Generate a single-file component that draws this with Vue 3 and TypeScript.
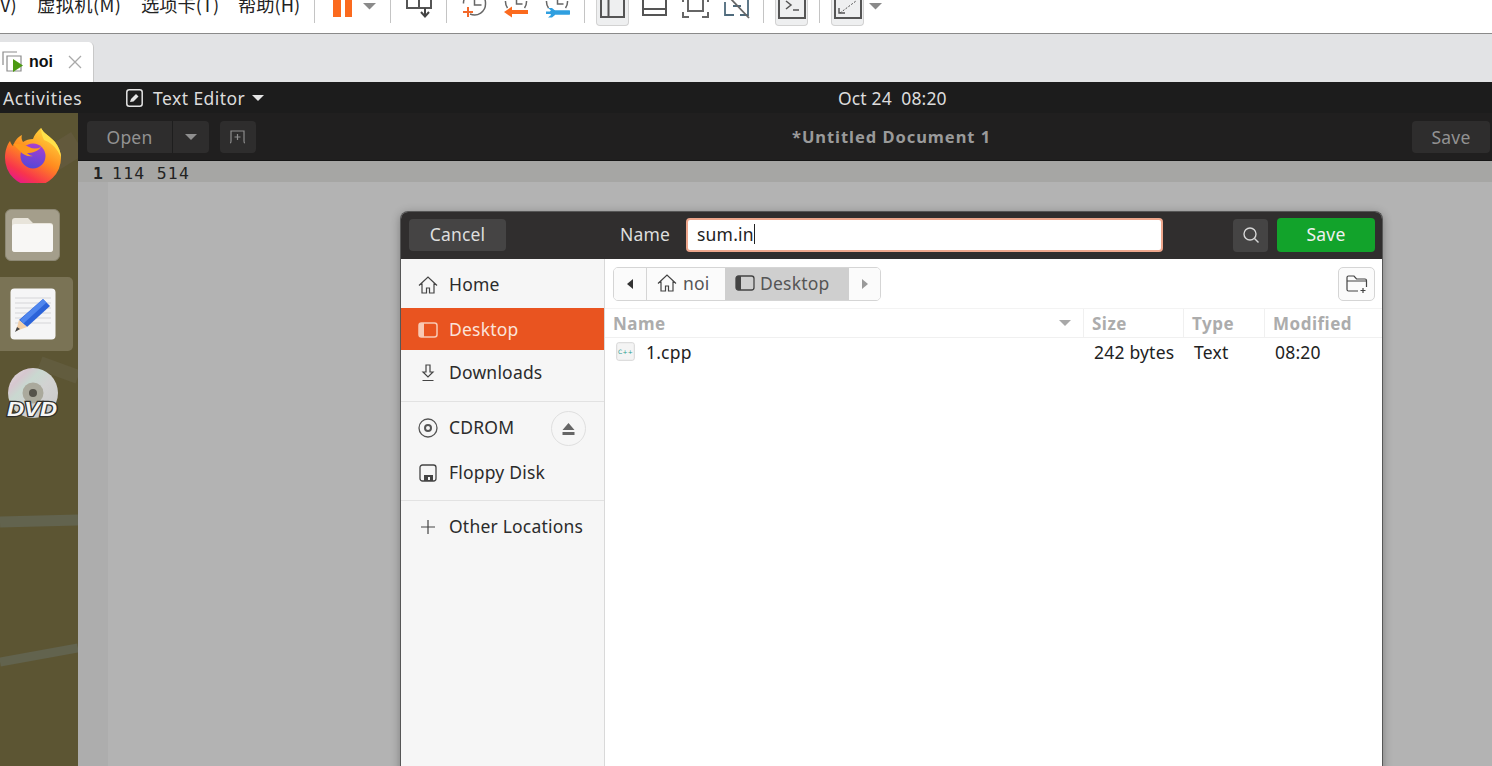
<template>
  <div class="page">
    <!-- host toolbar, cut off by the top of the screenshot -->
    <div class="toolbar">
      <div class="menu">
        <span class="m-view">V)</span>
        <span class="m-vm">虚拟机(M)</span>
        <span class="m-tab">选项卡(T)</span>
        <span class="m-help">帮助(H)</span>
      </div>
      <i class="sep s1"></i>
      <svg class="ic-pause" width="19" height="33" viewBox="0 0 19 33"><path d="M0 0h8v17H0zM12 0h7v17h-7z" fill="#fb6a1e" /></svg>
      <svg class="ic-caret" width="13" height="33" viewBox="0 0 13 33"><path d="M0 3h13L6.500 9.500z" fill="#8a8a8a" /></svg>
      <i class="sep s2"></i>
      <svg class="ic-snap" width="26" height="33" viewBox="0 0 26 33" fill="none" stroke="#555" stroke-width="2">
        <path d="M1 -4h24v12H1zM13 -4v12" />
        <path d="M19 8v8M15 12l4 4.500 4-4.500" stroke="#444" />
      </svg>
      <i class="sep s3"></i>
      <svg class="ic-clock1" width="25" height="33" viewBox="0 0 25 33" fill="none">
        <path d="M8 14A11 11 0 0 0 23.500 3.500A11 11 0 0 0 21 -4M1.500 3.500A11 11 0 0 1 4 -4M12.500 -3v8h7" stroke="#666" stroke-width="1.500" />
        <path d="M6 7v10M1 12h10" stroke="#f2682a" stroke-width="2" />
      </svg>
      <svg class="ic-clock2" width="25" height="33" viewBox="0 0 25 33" fill="none">
        <path d="M1.500 1A11 11 0 0 0 3.500 8M20.500 8A11 11 0 0 0 22.500 1M12.500 -3v7h6" stroke="#666" stroke-width="1.500" />
        <path d="M24 12H7" stroke="#fb6a1e" stroke-width="4" /><path d="M0 12l8-5.500v11z" fill="#fb6a1e" />
      </svg>
      <svg class="ic-clock3" width="25" height="33" viewBox="0 0 25 33" fill="none">
        <path d="M1.500 1A11 11 0 0 0 3.500 8M20.500 8A11 11 0 0 0 22.500 1M12.500 -3v7h6" stroke="#666" stroke-width="1.500" />
        <path d="M24 12.500H7" stroke="#2f9fe0" stroke-width="4.500" stroke-linecap="round" />
        <path d="M3 8h4l3 2.500v4.500l-3 2.500H3l3-2.500v-1H1v-2.500h5v-1z" fill="#2f9fe0" />
      </svg>
      <i class="sep s4"></i>
      <span class="tb-toggle t1">
        <svg width="25" height="33" viewBox="0 0 25 33" fill="none" stroke="#555" stroke-width="2"><path d="M1 -4h23v21H1zM8.500 -4v21" /></svg>
      </span>
      <svg class="ic-split" width="25" height="33" viewBox="0 0 25 33" fill="none" stroke="#555" stroke-width="2"><path d="M1 -4h23v19H1zM1 9h23" /></svg>
      <svg class="ic-full" width="27" height="33" viewBox="0 0 27 33" fill="none" stroke="#666" stroke-width="2"><path d="M1 12v5h6M20 17h6v-5M26 2v-5M1 2v-5M6 -3v14h15V-3" /></svg>
      <svg class="ic-nofull" width="26" height="33" viewBox="0 0 26 33" fill="none" stroke-width="1.800"><path d="M1 2v13h9M16 15h8V-2M9 6h8" stroke="#4e6a7c" /><path d="M6 -2l19 20" stroke="#666" /></svg>
      <i class="sep s5"></i>
      <span class="tb-toggle t2">
        <svg width="28" height="33" viewBox="0 0 28 33" fill="none" stroke="#555" stroke-width="2"><path d="M1 -4h26v22H1z" /><path d="M8 1l5 4-5 4M15 10h6" stroke-width="1.500" /></svg>
      </span>
      <i class="sep s6"></i>
      <span class="tb-toggle t3">
        <svg width="28" height="33" viewBox="0 0 28 33" fill="none" stroke="#555" stroke-width="2"><path d="M1 -4h26v22H1z" /><path d="M6 13l16-12" stroke-width="1" stroke-dasharray="2 1.500" /><path d="M5 8v5h6" stroke-width="1.400" /></svg>
      </span>
      <svg class="ic-caret2" width="13" height="33" viewBox="0 0 13 33"><path d="M0 3h13L6.500 9.500z" fill="#8a8a8a" /></svg>
    </div>

    <div class="tabstrip">
      <div class="tab">
        <svg width="23" height="23" viewBox="0 0 23 23" fill="none">
          <path d="M2 14V1h14M6 5h14v15H6z" stroke="#8b8b8b" stroke-width="1.200" />
          <path d="M12 8l10 6.500-10 6.500z" fill="#4c9a12" />
        </svg>
        <b>noi</b>
        <svg class="tab-x" width="14" height="14" viewBox="0 0 14 14"><path d="M1 1l12 12M13 1L1 13" stroke="#a9a9a9" stroke-width="1.300" /></svg>
      </div>
    </div>

    <div class="vm">
      <div class="topbar">
        <span class="activities">Activities</span>
        <svg class="app-ic" width="17" height="18" viewBox="0 0 17 18">
          <rect x=".8" y=".8" width="15.400" height="16.400" rx="2.500" fill="none" stroke="#e4e4e4" stroke-width="1.500" />
          <path d="M4 13l1-3 5-5 2.500 2.500-5 5z" fill="#e4e4e4" />
        </svg>
        <span class="app-name">Text Editor</span>
        <i class="top-caret"></i>
        <span class="clock">Oct 24&nbsp; 08:20</span>
      </div>
      <div class="desktop">
        <aside class="dock">
          <svg class="streaks" width="78" height="653" viewBox="0 0 78 653" fill="none">
            <path d="M0 409l78-2" stroke="#62634e" stroke-width="11" />
            <path d="M0 549l78-14" stroke="#62634e" stroke-width="9" />
            <path d="M30 60L78 30" stroke="#62593c" stroke-width="26" />
            <path d="M40 250l38 14" stroke="#625c3e" stroke-width="14" />
          </svg>
          <div class="dock-item fox">
            <svg width="58" height="56" viewBox="0 0 58 56">
              <defs>
                <linearGradient id="foxBody" x1=".8" y1=".1" x2=".3" y2="1">
                  <stop offset="0" stop-color="#ffd23a" />
                  <stop offset=".45" stop-color="#ff8a1f" />
                  <stop offset=".8" stop-color="#f8354c" />
                  <stop offset="1" stop-color="#e5178c" />
                </linearGradient>
                <linearGradient id="foxBall" x1=".6" y1="0" x2=".4" y2="1">
                  <stop offset="0" stop-color="#a83fd0" />
                  <stop offset="1" stop-color="#5447d8" />
                </linearGradient>
              </defs>
              <path d="M37 1c3 6 9 8 14 14 4 5 6 11 6 16a28 28 0 0 1-56 0c0-7 2-13 5-17 1 3 2 4 3 5 2-6 5-9 9-11-1 3 0 5 1 7 3-2 6-3 10-3 1-4 4-7 8-11z" fill="url(#foxBody)" />
              <path d="M37 1c3 6 9 8 14 14 4 5 6 11 6 16-3-9-9-15-17-18-2-4-3-8-3-12z" fill="#ffe14a" />
              <circle cx="29" cy="29" r="12.500" fill="url(#foxBall)" />
              <path d="M9 17c5-1 12 0 16 3 4 2 8 2 12 0-3 4-8 6-14 6 2 2 4 3 6 3-5 1-10-1-13-5-3-3-5-5-7-7z" fill="#ff9a1e" />
            </svg>
          </div>
          <div class="dock-item files">
            <div class="files-box">
              <svg width="41" height="34" viewBox="0 0 41 34">
                <path d="M0 3a3 3 0 0 1 3-3h13l5 5h17a3 3 0 0 1 3 3v23a3 3 0 0 1-3 3H3a3 3 0 0 1-3-3z" fill="#e8e4da" />
                <path d="M0 9a3 3 0 0 1 3-3h35a3 3 0 0 1 3 3v22a3 3 0 0 1-3 3H3a3 3 0 0 1-3-3z" fill="#f8f7f5" />
              </svg>
            </div>
          </div>
          <div class="dock-item editor">
            <svg width="46" height="52" viewBox="0 0 46 52">
              <rect x=".5" y=".5" width="45" height="51" rx="4" fill="#f5f5f6" />
              <path d="M5 10h36M5 15h36M5 20h36M5 25h36M5 30h36M5 35h36" stroke="#d5d5d8" />
              <path d="M33 11l7 7-23 21-8-7z" fill="#2b63d9" />
              <path d="M33 11l3.500 3.500-23 21L10 32z" fill="#4f86ee" />
              <path d="M9 32l8 7-11 4z" fill="#f2cfa8" />
              <path d="M7 39l3 2-5 3z" fill="#444" />
            </svg>
          </div>
          <div class="dock-item dvd">
            <svg width="58" height="52" viewBox="0 0 58 52">
              <defs>
                <linearGradient id="disc" x1="0" y1="0" x2="1" y2="1">
                  <stop offset="0" stop-color="#e2e2e2" />
                  <stop offset=".22" stop-color="#d6c7cf" />
                  <stop offset=".35" stop-color="#c9d8d0" />
                  <stop offset=".55" stop-color="#d2d2d2" />
                  <stop offset="1" stop-color="#c8c8c8" />
                </linearGradient>
              </defs>
              <circle cx="29" cy="26" r="25" fill="url(#disc)" />
              <circle cx="29" cy="26" r="10.500" fill="#aaa99c" />
              <circle cx="29" cy="26" r="4" fill="#55534a" />
              <text x="28" y="49" text-anchor="middle" textLength="50" lengthAdjust="spacingAndGlyphs" class="dvd-text">DVD</text>
            </svg>
          </div>
        </aside>

        <main class="app">
          <header class="app-head">
            <div class="open-group">
              <span class="dim-btn open-btn">Open</span>
              <span class="dim-btn open-arrow"><i class="dim-caret"></i></span>
            </div>
            <span class="dim-btn newtab">
              <svg width="18" height="14" viewBox="0 0 18 14" fill="none" stroke="#8c8c8c" stroke-width="1.200"><path d="M1 13c1 0 1-1 1-2V1h13v10c0 1 0 2 1 2M8.500 4v6M5.500 7h6" /></svg>
            </span>
            <span class="doc-title">*Untitled Document 1</span>
            <span class="dim-btn head-save">Save</span>
          </header>
          <div class="editor-area">
            <div class="line-one"><b>1</b><span class="line-text">114 514</span></div>
            <div class="editor-body"><div class="gutter"></div></div>
          </div>

          <section class="dialog">
            <div class="dlg-head">
              <span class="btn-cancel">Cancel</span>
              <span class="name-label">Name</span>
              <div class="name-input">sum.in<i class="cursor"></i></div>
              <span class="btn-search">
                <svg width="18" height="18" viewBox="0 0 18 18" fill="none" stroke="#d6d6d6" stroke-width="1.400"><circle cx="8" cy="8" r="6" /><path d="M12.500 12.500l4 4" /></svg>
              </span>
              <span class="btn-save">Save</span>
            </div>
            <div class="dlg-body">
              <nav class="places">
                <div class="place">
                  <svg width="20" height="18" viewBox="0 0 20 18" fill="none" stroke="#444" stroke-width="1.200"><path d="M1 9.500L10 1l9 8.500M4 7.500V17h4.500v-5h3v5H16V7.500" /></svg>
                  <span>Home</span>
                </div>
                <div class="place active">
                  <svg width="20" height="16" viewBox="0 0 20 16"><rect x="1" y="1" width="18" height="14" rx="2.500" fill="none" stroke="#f8c9b4" stroke-width="1.500" /><path d="M1 3.500A2.500 2.500 0 0 1 3.500 1H6v14H3.500A2.500 2.500 0 0 1 1 12.500z" fill="#f8c9b4" /></svg>
                  <span>Desktop</span>
                </div>
                <div class="place">
                  <svg width="20" height="18" viewBox="0 0 20 18" fill="none" stroke="#444" stroke-width="1.200"><path d="M8 1h4v7h3l-5 5-5-5h3zM4.500 16.500h11" /></svg>
                  <span>Downloads</span>
                </div>
                <hr class="place-sep first" />
                <div class="place">
                  <svg width="20" height="20" viewBox="0 0 20 20" fill="none" stroke="#555" stroke-width="1.300"><circle cx="10" cy="10" r="9" /><circle cx="10" cy="10" r="3" stroke-width="2" /></svg>
                  <span>CDROM</span>
                  <span class="eject"><svg width="13" height="12" viewBox="0 0 13 12" fill="#666"><path d="M6.500 0l6 7H.5zM.5 9h12v3H.5z" /></svg></span>
                </div>
                <div class="place floppy">
                  <svg width="20" height="18" viewBox="0 0 20 18"><rect x="2" y="1" width="16" height="16" rx="2.500" fill="none" stroke="#444" stroke-width="1.300" /><path d="M6 17v-6h9v6z" fill="#444" /><path d="M10 13h2v3h-2z" fill="#f6f6f6" /></svg>
                  <span>Floppy Disk</span>
                </div>
                <hr class="place-sep second" />
                <div class="place">
                  <svg width="20" height="16" viewBox="0 0 20 16" fill="none" stroke="#444" stroke-width="1.200"><path d="M10 1v14M3 8h14" /></svg>
                  <span>Other Locations</span>
                </div>
              </nav>
              <div class="browser">
                <div class="pathrow">
                  <div class="pathbar">
                    <span class="path-arrow back"><i class="tri-left"></i></span>
                    <span class="path-seg noi">
                      <svg width="20" height="18" viewBox="0 0 20 18" fill="none" stroke="#444" stroke-width="1.200"><path d="M1 9.500L10 1l9 8.500M4 7.500V17h4.500v-5h3v5H16V7.500" /></svg>
                      noi
                    </span>
                    <span class="path-seg current">
                      <svg width="20" height="16" viewBox="0 0 20 16"><rect x="1" y="1" width="18" height="14" rx="2.500" fill="none" stroke="#444" stroke-width="1.300" /><path d="M1 3.500A2.500 2.500 0 0 1 3.500 1H6v14H3.500A2.500 2.500 0 0 1 1 12.500z" fill="#444" /></svg>
                      Desktop
                    </span>
                    <span class="path-arrow fwd"><i class="tri-right"></i></span>
                  </div>
                  <span class="new-folder">
                    <svg width="22" height="19" viewBox="0 0 22 19" fill="none" stroke="#444" stroke-width="1.200"><path d="M12 16H2.500A1.500 1.500 0 0 1 1 14.500v-12A1.500 1.500 0 0 1 2.500 1H8l2.500 3H19a1.500 1.500 0 0 1 1.500 1.500V12M1 6h19.500M17 13v5M14.500 15.500h5" /></svg>
                  </span>
                </div>
                <div class="cols heads">
                  <div class="col name-col">Name<i class="sort-caret"></i></div>
                  <div class="col">Size</div>
                  <div class="col">Type</div>
                  <div class="col">Modified</div>
                </div>
                <div class="cols row" v-for="f in files" :key="f.name">
                  <div class="cell file-name">
                    <svg width="19" height="19" viewBox="0 0 19 19"><rect x=".7" y=".7" width="17.600" height="17.600" rx="2" fill="#f4f4f4" stroke="#d5d5d5" /><text x="9.500" y="12" text-anchor="middle" class="cpp-mark">C++</text></svg>
                    {{ f.name }}
                  </div>
                  <div class="cell size-cell">{{ f.size }}</div>
                  <div class="cell">{{ f.type }}</div>
                  <div class="cell">{{ f.modified }}</div>
                </div>
              </div>
            </div>
          </section>
        </main>
      </div>
    </div>
  </div>
</template>

<script setup lang="ts">
interface FileRow {
  name: string;
  size: string;
  type: string;
  modified: string;
}

const files: FileRow[] = [
  { name: "1.cpp", size: "242 bytes", type: "Text", modified: "08:20" },
];
</script>

<style>
html,
body {
  margin: 0;
  overflow: hidden;
  background: #fff;
}
</style>

<style scoped>
.page {
  width: 1492px;
  height: 766px;
  overflow: hidden;
  display: flex;
  flex-direction: column;
  font-family: "Noto Sans", "Noto Sans CJK SC", sans-serif;
}
svg {
  display: block;
  flex: none;
}

/* host toolbar */
.toolbar {
  height: 33px;
  flex: none;
  display: flex;
  background: #fff;
  border-bottom: 1px solid #8a8a8a;
  overflow: hidden;
}
.menu {
  display: flex;
  width: 314px;
  flex: none;
  font: 18.300px "Noto Sans CJK SC", sans-serif;
  color: #222;
  margin-top: -8px;
  line-height: 24px;
  white-space: nowrap;
}
.m-view { width: 37px; }
.m-vm { width: 104px; letter-spacing: 0.400px; }
.m-tab { width: 97px; }
.sep {
  width: 1px;
  height: 23px;
  background: #c4c4c4;
  flex: none;
}
.ic-pause { margin-left: 18px; }
.ic-caret { margin-left: 11px; }
.s2 { margin-left: 14px; }
.ic-snap { margin-left: 15px; }
.s3 { margin-left: 14px; }
.ic-clock1 { margin-left: 15px; }
.ic-clock2 { margin-left: 17px; }
.ic-clock3 { margin-left: 16px; }
.s4 { margin-left: 14px; }
.tb-toggle {
  flex: none;
  width: 33px;
  height: 26px;
  box-sizing: border-box;
  background: #eeeff0;
  border: 1px solid #d2d2d2;
  border-top: 0;
  border-radius: 0 0 4px 4px;
  display: flex;
  justify-content: center;
}
.t1 { margin-left: 11px; }
.ic-split { margin-left: 13px; }
.ic-full { margin-left: 15px; }
.ic-nofull { margin-left: 15px; }
.s5 { margin-left: 13px; }
.t2 { margin-left: 11px; }
.s6 { margin-left: 11px; }
.t3 { margin-left: 11px; }
.ic-caret2 { margin-left: 5px; }

/* tabs */
.tabstrip {
  height: 48px;
  flex: none;
  background: #e2e3e5;
  display: flex;
  align-items: flex-end;
}
.tab {
  width: 94px;
  height: 40px;
  box-sizing: border-box;
  background: #fff;
  border-right: 1px solid #c8c8c8;
  border-radius: 0 5px 0 0;
  display: flex;
  align-items: center;
  padding-left: 1px;
  color: #111;
}
.tab b {
  font: bold 16px "Liberation Sans", sans-serif;
  margin-left: 5px;
}
.tab-x { margin-left: 15px; }

/* guest */
.vm {
  flex: 1;
  min-height: 0;
  display: flex;
  flex-direction: column;
}
.topbar {
  height: 31px;
  flex: none;
  background: #1c1c1c;
  color: #dcdcdc;
  font-size: 17.500px;
  letter-spacing: 0.450px;
  display: flex;
  align-items: center;
  position: relative;
  padding-left: 3px;
}
.activities { width: 123px; letter-spacing: 0.650px; }
.app-name { margin-left: 10px; }
.top-caret {
  margin-left: 7px;
  border: 6px solid transparent;
  border-top-color: #e4e4e4;
  border-bottom: 0;
}
.clock {
  position: absolute;
  left: 838px;
  letter-spacing: 0.150px;
  white-space: nowrap;
}
.desktop {
  flex: 1;
  min-height: 0;
  display: flex;
  position: relative;
}
.dock {
  width: 78px;
  flex: none;
  background: #5c5533;
  position: relative;
  display: flex;
  flex-direction: column;
  overflow: hidden;
}
.streaks {
  position: absolute;
  left: 0;
  top: 0;
}
.dock-item {
  position: relative;
  display: flex;
}
.fox { padding: 14px 0 0 4px; }
.files { padding: 26px 0 0 5px; }
.files-box {
  width: 55px;
  height: 52px;
  box-sizing: border-box;
  background: #a49e8b;
  border: 1px solid #8d8874;
  border-radius: 6px;
  display: flex;
  align-items: center;
  justify-content: center;
}
.editor {
  margin-top: 16px;
  width: 73px;
  height: 74px;
  box-sizing: border-box;
  padding: 11px 0 0 10px;
  background: #7a7355;
  border-radius: 0 5px 5px 0;
}
.dvd { padding: 16px 0 0 4px; }
.dvd-text {
  font: italic bold 21px "Liberation Sans", sans-serif;
  fill: #f6f6f6;
  stroke: #2e2e2a;
  stroke-width: 2.500px;
  paint-order: stroke;
}

.app {
  flex: 1;
  min-width: 0;
  display: flex;
  flex-direction: column;
  position: relative;
}
.app-head {
  height: 48px;
  flex: none;
  box-sizing: border-box;
  background: #201f1f;
  border-bottom: 1px solid #151515;
  display: flex;
  align-items: center;
  padding-left: 9px;
  position: relative;
  font-size: 17.500px;
  letter-spacing: 0.200px;
  color: #929292;
}
.dim-btn {
  height: 32px;
  box-sizing: border-box;
  background: #2e2d2d;
  border-radius: 4px;
  display: flex;
  align-items: center;
  justify-content: center;
}
.open-group { display: flex; }
.open-btn {
  width: 86px;
  border-radius: 4px 0 0 4px;
  border-right: 1px solid #1e1e1e;
}
.open-arrow {
  width: 36px;
  border-radius: 0 4px 4px 0;
}
.dim-caret {
  border: 6px solid transparent;
  border-top-color: #8f8f8f;
  border-bottom: 0;
}
.newtab {
  width: 36px;
  margin-left: 11px;
}
.doc-title {
  position: absolute;
  left: 714px;
  font-weight: 700;
  font-size: 16.500px;
  letter-spacing: 0.950px;
  color: #9a9a9a;
  white-space: nowrap;
}
.head-save {
  width: 78px;
  margin-left: auto;
  margin-right: 2px;
}
.editor-area {
  flex: 1;
  min-height: 0;
  display: flex;
  flex-direction: column;
  background: #b3b3b3;
}
.line-one {
  height: 21px;
  flex: none;
  box-sizing: border-box;
  padding-top: 3px;
  background: #a6a6a4;
  display: flex;
  align-items: center;
  font: 16.400px "DejaVu Sans Mono", monospace;
  color: #232323;
  padding-left: 15px;
}
.line-one b { width: 19px; }
.line-text { letter-spacing: 1.300px; }
.editor-body {
  flex: 1;
  display: flex;
}
.gutter {
  width: 30px;
  background: #adadad;
}

/* save dialog */
.dialog {
  position: absolute;
  left: 322px;
  top: 98px;
  width: 983px;
  height: 600px;
  box-sizing: border-box;
  border: 1px solid #565656;
  border-bottom: 0;
  border-radius: 8px 8px 0 0;
  overflow: hidden;
  display: flex;
  flex-direction: column;
  box-shadow: 0 2px 10px rgba(0, 0, 0, 0.3);
}
.dlg-head {
  height: 47px;
  flex: none;
  box-sizing: border-box;
  background: #302e2e;
  display: flex;
  align-items: center;
  padding: 0 7px 1px 8px;
  font-size: 17.500px;
  letter-spacing: 0.200px;
  color: #dedede;
}
.btn-cancel {
  width: 97px;
  height: 32px;
  box-sizing: border-box;
  padding-bottom: 2px;
  background: #454444;
  border-radius: 4px;
  display: flex;
  align-items: center;
  justify-content: center;
}
.name-label {
  width: 50px;
  margin-left: 114px;
  padding-bottom: 2px;
}
.name-input {
  width: 477px;
  height: 34px;
  box-sizing: border-box;
  margin-left: 16px;
  background: #fff;
  border: 2px solid #eea68c;
  border-radius: 4px;
  color: #222;
  display: flex;
  align-items: center;
  padding: 0 0 2px 9px;
}
.cursor {
  width: 1px;
  height: 20px;
  background: #222;
}
.btn-search {
  width: 35px;
  height: 33px;
  margin-left: auto;
  background: #454444;
  border-radius: 4px;
  display: flex;
  align-items: center;
  justify-content: center;
}
.btn-save {
  width: 98px;
  height: 34px;
  box-sizing: border-box;
  padding-bottom: 2px;
  margin-left: 9px;
  background: #12a32b;
  border-radius: 4px;
  color: #f0f0f0;
  display: flex;
  align-items: center;
  justify-content: center;
}
.dlg-body {
  flex: 1;
  display: flex;
  background: #fff;
  font-size: 17.500px;
  letter-spacing: 0.200px;
  color: #2b2b2b;
}
.places {
  width: 204px;
  flex: none;
  box-sizing: border-box;
  background: #f6f6f6;
  border-right: 1px solid #d9d9d9;
  padding-top: 3px;
}
.place {
  height: 44px;
  display: flex;
  align-items: center;
  padding-left: 17px;
  gap: 11px;
  position: relative;
}
.place > svg { margin-top: 2px; }
.place.active {
  height: 42px;
  margin-top: 2px;
  background: #e95420;
  color: #fbe3d9;
}
.place-sep {
  border: 0;
  border-top: 1px solid #e2e2e2;
}
.place-sep.first { margin: 7px 0 3px; }
.place-sep.second { margin: 6px 0 3px; }
.floppy { margin-top: 1px; }
.eject {
  position: absolute;
  left: 150px;
  top: 6px;
  width: 33px;
  height: 33px;
  border: 1px solid #dfdfdf;
  border-radius: 50%;
  display: flex;
  align-items: center;
  justify-content: center;
}
.browser {
  flex: 1;
  min-width: 0;
}
.pathrow {
  display: flex;
  align-items: flex-start;
  padding: 8px 7px 0 8px;
  height: 49px;
  box-sizing: border-box;
  justify-content: space-between;
}
.pathbar {
  display: flex;
  height: 34px;
  box-sizing: border-box;
  border: 1px solid #d5d5d5;
  border-radius: 5px;
  overflow: hidden;
  color: #555;
}
.path-arrow {
  display: flex;
  align-items: center;
  justify-content: center;
  background: #fbfbfb;
}
.back {
  width: 32px;
  border-right: 1px solid #d5d5d5;
}
.fwd { width: 31px; }
.tri-left {
  border: 5px solid transparent;
  border-right: 6px solid #333;
  border-left: 0;
}
.tri-right {
  border: 5px solid transparent;
  border-left: 6px solid #9a9a9a;
  border-right: 0;
}
.path-seg {
  display: flex;
  align-items: center;
  gap: 6px;
  padding-bottom: 2px;
  background: #fbfbfb;
}
.noi {
  width: 78px;
  box-sizing: border-box;
  padding-left: 10px;
}
.current {
  width: 124px;
  box-sizing: border-box;
  padding-left: 10px;
  background: #cfcfcf;
  gap: 5px;
}
.new-folder {
  width: 37px;
  height: 34px;
  box-sizing: border-box;
  border: 1px solid #d5d5d5;
  border-radius: 5px;
  background: #fbfbfb;
  display: flex;
  align-items: center;
  justify-content: center;
}
.cols {
  display: grid;
  grid-template-columns: 479px 100px 81px 1fr;
  align-items: center;
}
.heads {
  height: 30px;
  border-top: 1px solid #f3f3f3;
  border-bottom: 1px solid #f0f0f0;
  box-sizing: border-box;
  color: #acacac;
  font-weight: 700;
  font-size: 17px;
  letter-spacing: 0.500px;
}
.col {
  height: 100%;
  display: flex;
  align-items: center;
  padding-left: 8px;
  box-sizing: border-box;
  border-right: 1px solid #f0f0f0;
}
.col:last-child { border-right: 0; }
.sort-caret {
  margin-left: auto;
  margin-right: 12px;
  border: 6.500px solid transparent;
  border-top-color: #a8a8a8;
  border-bottom: 0;
}
.row {
  height: 27px;
  color: #222;
}
.cell {
  padding-left: 10px;
}
.size-cell {
  white-space: nowrap;
}
.file-name {
  display: flex;
  align-items: center;
  gap: 11px;
  padding-left: 11px;
}
.cpp-mark {
  font: 6px "DejaVu Sans", sans-serif;
  fill: #2a9d8f;
}
</style>
